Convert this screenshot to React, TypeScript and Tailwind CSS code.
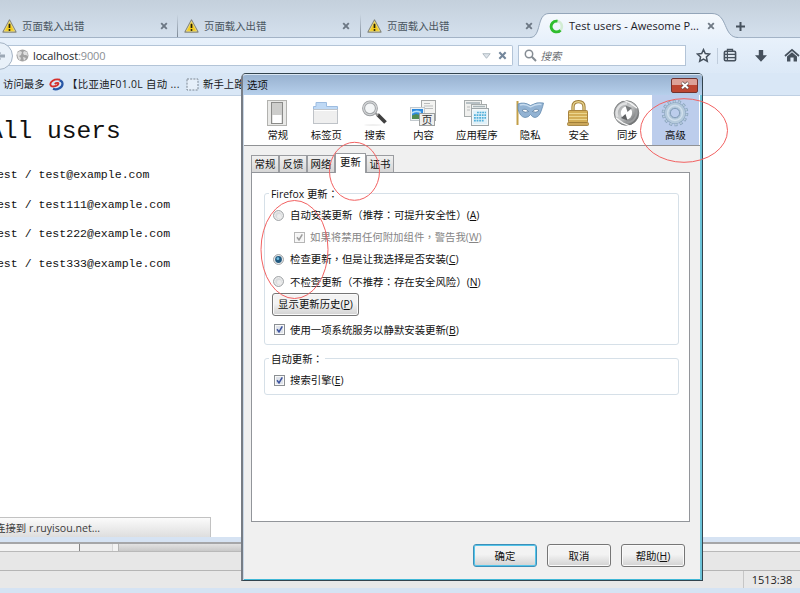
import React from "react";

type Kids = { children?: React.ReactNode };

/* Centred full-width punctuation */
const P = ({ children }: Kids) => <span className="font-['Noto_Sans_CJK_TC']">{children}</span>;
const U = ({ k }: { k: string }) => (
  <span>(<span className="underline underline-offset-1">{k}</span>)</span>
);

const Warning = () => (
  <svg width="15" height="14" viewBox="0 0 15 14" className="shrink-0">
    <path d="M7.5 1 L14 13 H1 Z" fill="#f2cb1d" stroke="#85867c" strokeWidth="1.3" strokeLinejoin="round" />
    <path d="M7.5 2.4 L12.7 12.2 H2.3 Z" fill="none" stroke="#fbf0a5" strokeWidth=".6" />
    <path d="M7.5 4.8 V9" stroke="#24210c" strokeWidth="1.7" />
    <circle cx="7.5" cy="11" r="1" fill="#24210c" />
  </svg>
);

const Cross = ({ color = "#6c7784", size = 8 }: { color?: string; size?: number }) => (
  <svg width={size} height={size} viewBox="0 0 8 8" className="shrink-0">
    <path d="M1.2 1.2 L6.8 6.8 M6.8 1.2 L1.2 6.8" stroke={color} strokeWidth="1.9" />
  </svg>
);

const BrowserTab = ({ pad, width }: { pad: string; width: string }) => (
  <div className={`flex h-[37px] items-center pt-[14px] ${pad} ${width}`}>
    <Warning />
    <span className="ml-[5px] flex-1 text-[#4b5661]">页面载入出错</span>
    <Cross />
  </div>
);

const TabSep = () => <div className="mt-[14px] h-[23px] w-px bg-linear-to-b from-transparent to-[#7b8794]" />;

const TabStrip = () => (
  <div className="relative flex h-[38px] shrink-0 border-b border-[#a3b3c6] bg-linear-to-b from-[#c4d0dc] to-[#d4e0ed]">
    <BrowserTab width="w-[177px]" pad="pl-[2px] pr-[9px]" />
    <TabSep />
    <BrowserTab width="w-[182px]" pad="pl-[6px] pr-[10px]" />
    <TabSep />
    <BrowserTab width="w-[177px]" pad="pl-[6px] pr-[5px]" />
    <svg width="214" height="27" viewBox="0 0 214 27" className="absolute left-[530px] top-[12px]">
      <defs>
        <linearGradient id="active" x1="0" y1="0" x2="0" y2="1">
          <stop offset="0" stopColor="#f5f9fd" />
          <stop offset="1" stopColor="#e8f1fb" />
        </linearGradient>
      </defs>
      <path d="M0 27 V25.5 C12 25.5 6 1.5 19 1.5 H182 C198 1.5 193 25.5 208 25.5 V27 Z" fill="url(#active)" />
      <path d="M0 25.5 C12 25.5 6 1.5 19 1.5 H182 C198 1.5 193 25.5 208 25.5" fill="none" stroke="#93a5b9" />
    </svg>
    <div className="relative flex h-[37px] flex-1 items-center pt-[15px] pl-[11px]">
      <svg width="15" height="15" viewBox="0 0 15 15">
        <circle cx="7.5" cy="7.5" r="5.4" fill="none" stroke="#d3ecd3" strokeWidth="2.6" />
        <path d="M8.5 2.2 A5.4 5.4 0 1 0 11.5 11.2" fill="none" stroke="#2fbd2f" strokeWidth="2.8" />
      </svg>
      <span className="ml-[5px] w-[138px] whitespace-nowrap text-[11px] tracking-[0.02px] text-[#1b2026]">Test users - Awesome P...</span>
      <Cross color="#6f7984" />
      <svg width="11" height="11" viewBox="0 0 11 11" className="ml-[20px]">
        <path d="M5.5 1 V10 M1 5.5 H10" stroke="#46515d" strokeWidth="2" />
      </svg>
    </div>
  </div>
);

const NavBar = () => (
  <div className="flex h-[35px] shrink-0 items-center bg-linear-to-b from-[#e8f1fb] to-[#dce9f7]">
    <svg width="14" height="30" viewBox="0 0 14 30" className="relative z-10 -mr-[14px]">
      <circle cx="-1" cy="15" r="13.5" fill="#e9f1f9" stroke="#a4b3c4" />
      <path d="M0 15 H5 M0 11 L-4 15 L0 19" stroke="#9ca8b5" strokeWidth="3" fill="none" />
    </svg>
    <div className="flex h-[21px] w-[514px] items-center rounded-r-[2px] border border-l-0 border-[#b3c4d7] bg-white pl-[16px]">
      <svg width="13" height="13" viewBox="0 0 13 13">
        <circle cx="6.5" cy="6.5" r="6" fill="#a2a2a2" />
        <path d="M1 4 L4 2 L6 3 L5 6 L3 7 L5 9 L4 12 L2 9 Z M8 2 L11 3 L12 7 L10 6 L8 6 L7 4 Z M7 8 L10 9 L8 12 Z" fill="#dedede" />
      </svg>
      <span className="ml-[4px] flex-1 text-[11px] tracking-[-0.12px] text-[#22262b]">
        localhost<span className="text-[#8b8f94]">:9000</span>
      </span>
      <svg width="9" height="6" viewBox="0 0 9 6">
        <path d="M.8 .7 H8.2 L4.5 5.3 Z" fill="#dde3e9" stroke="#a1adb8" strokeWidth=".8" />
      </svg>
      <span className="ml-[7px] mr-[5px]"><Cross color="#74879b" size={9} /></span>
    </div>
    <div className="ml-[5px] flex h-[21px] w-[169px] items-center border border-[#b3c4d7] bg-white pl-[5px]">
      <svg width="13" height="13" viewBox="0 0 13 13">
        <circle cx="5" cy="5" r="3.7" fill="none" stroke="#858c93" strokeWidth="1.5" />
        <path d="M7.8 7.8 L12 12" stroke="#858c93" strokeWidth="2" />
      </svg>
      <span className="ml-[4px] italic text-[#6c7074]">搜索</span>
    </div>
    <svg width="15" height="15" viewBox="0 0 15 15" className="ml-[10px]">
      <path d="M7.5 1.6 L9.3 5.5 L13.6 6 L10.4 8.9 L11.3 13.2 L7.5 11 L3.7 13.2 L4.6 8.9 L1.4 6 L5.7 5.5 Z" fill="#eef4fa" stroke="#46515d" strokeWidth="1.5" />
    </svg>
    <div className="ml-[6px] h-[16px] w-px bg-[#c0cddc]" />
    <svg width="14" height="15" viewBox="0 0 14 15" className="ml-[5px]">
      <path d="M4.5 3 V1.5 H9.5 V3" fill="none" stroke="#46515d" strokeWidth="1.4" />
      <rect x="1.4" y="3.2" width="11.2" height="9.6" rx="1.2" fill="#dfe8f1" stroke="#46515d" strokeWidth="1.6" />
      <path d="M1.5 6.4 H12.5 M1.5 9.6 H12.5 M4.4 4 V12" stroke="#46515d" strokeWidth="1.2" />
    </svg>
    <svg width="14" height="14" viewBox="0 0 14 14" className="ml-[17px]">
      <path d="M4.8 1 H9.2 V6.3 H13 L7 12.8 L1 6.3 H4.8 Z" fill="#46515d" />
    </svg>
    <svg width="16" height="15" viewBox="0 0 16 15" className="ml-[16px] shrink-0">
      <path d="M1 8 L8 1.8 L15 8" fill="none" stroke="#46515d" strokeWidth="1.7" />
      <path d="M3 8.4 L8 4.2 L13 8.4 V13.5 H9.6 V9.5 H6.4 V13.5 H3 Z" fill="#46515d" />
    </svg>
  </div>
);

const Bookmarks = () => (
  <div className="flex h-[23px] shrink-0 items-center whitespace-nowrap border-b border-[#bfd0e3] bg-[#d9e7f6] pl-[3px] text-[#17191c]">
    <span className="w-[46px]">访问最多</span>
    <svg width="15" height="13" viewBox="0 0 15 13">
      <path d="M4 10.8 C8 12.500 13.800 9.500 13.500 5.500 C13.300 3.500 12 2.600 10.500 2.300" fill="none" stroke="#2857a6" strokeWidth="2.200" />
      <path d="M11 1.700 C5 .3 .6 4 1.500 7 C2.200 9.200 6 8.800 8.300 7.200 C9.500 6.300 9.800 5.200 8.800 4.900 C7.800 4.700 6.500 5.200 5.800 6" fill="none" stroke="#d6302c" strokeWidth="1.900" />
    </svg>
    <span className="ml-[3px] w-[119px] tracking-[0.32px]">【比亚迪F01.0L 自动 ...</span>
    <svg width="13" height="13" viewBox="0 0 13 13">
      <rect x="1" y="1" width="11" height="11" fill="#e6eff9" stroke="#7c8793" strokeDasharray="2 1.2" />
    </svg>
    <span className="ml-[4px]">新手上路</span>
  </div>
);

const Users = () => (
  <div className="h-[421px] shrink-0 overflow-hidden bg-white font-['Liberation_Mono'] text-[#111]">
    <h1 className="-ml-[12px] mt-[20px] h-[32px] text-[24.6px] leading-[32px]">All users</h1>
    <div className="-ml-[10px] mt-[17px] text-[11.55px]">
      {["test@example.com", "test111@example.com", "test222@example.com", "test333@example.com"].map((m) => (
        <div key={m} className="mt-[9.6px] h-[20px] whitespace-pre leading-[20px]">{"test / " + m}</div>
      ))}
    </div>
  </div>
);

const Footer = () => (
  <>
    <div className="h-[20px] shrink-0 bg-white">
      <div className="flex h-[20px] w-[211px] items-center whitespace-nowrap border-r border-t border-[#c2c2c2] bg-linear-to-b from-[#fbfbfb] to-[#dedede] text-[#3c3c3c]">
        <span className="-ml-[5px]">连接到 <span className="text-[10.6px]">r.ruyisou.net...</span></span>
      </div>
    </div>
    <div className="h-[5px] shrink-0 bg-[#d6e3f3]" />
    <div className="h-[2px] shrink-0 bg-[#a5a6a8]" />
    <div className="flex h-[7px] shrink-0 bg-[#f3f3f3]">
      <div className="w-[80px] border-r border-[#858585]" />
      <div className="w-[33px] border-r border-[#d8d8d8] bg-[#ededed]" />
      <div className="ml-[5px] w-[124px] border-l border-[#b5b5b5] bg-linear-to-b from-[#e2e2e2] to-[#c9c9c9]" />
    </div>
    <div className="h-[19px] shrink-0 border-t border-[#b9b9b9] bg-[#e7e7e7]" />
    <div className="flex h-[18px] shrink-0 justify-end border-t border-[#b5b5b5] bg-[#e8e8e8]">
      <div className="flex w-[57px] items-center justify-center border-l border-[#c6c6c6] text-[11px] text-[#222]">1513:38</div>
    </div>
    <div className="flex-1 bg-[#d5e3f3]" />
  </>
);

const SwitchIcon = () => (
  <svg width="26" height="26" viewBox="0 0 26 26">
    <rect x="2.500" y=".5" width="19" height="25" fill="#e9e9e7" stroke="#b2b2af" />
    <rect x="6.500" y="2.500" width="11" height="21" fill="#cdcdcb" stroke="#8b8b89" />
    <rect x="7.500" y="15" width="9" height="8" fill="#fff" />
  </svg>
);
const FolderIcon = () => (
  <svg width="26" height="26" viewBox="0 0 26 26">
    <path d="M.5 12 V6.500 H3 V2.500 H13.500 V6.500 H24.500 V12 Z" fill="#bfd9f5" stroke="#9dbce0" />
    <rect x=".5" y="9.500" width="24" height="14" fill="#efefef" stroke="#bfc3c8" />
    <path d="M1 10.500 H24" stroke="#fff" />
  </svg>
);
const SearchIcon = () => (
  <svg width="26" height="26" viewBox="0 0 26 26">
    <ellipse cx="11" cy="25" rx="9" ry=".7" fill="#ebebeb" />
    <path d="M15.500 14.500 L23.500 22.500" stroke="#404040" strokeWidth="3.800" />
    <path d="M12.500 12 L16 15.500" stroke="#999" strokeWidth="2.200" />
    <circle cx="8" cy="8.300" r="6.400" fill="#f4f6f7" stroke="#9b9ea1" strokeWidth="3" />
    <circle cx="8" cy="8.300" r="6.400" fill="none" stroke="#d2d4d6" strokeWidth="1.200" />
  </svg>
);
const ContentIcon = () => (
  <svg width="28" height="26" viewBox="0 0 28 26">
    <rect x="11.500" y=".5" width="14" height="20" fill="#f4f4f2" stroke="#a6a8a8" />
    <path d="M14 3.500 H20 M14 6 H23 M14 8.500 H23" stroke="#bbbdbd" />
    <rect x=".5" y="7.500" width="14" height="13" fill="#eef2f4" stroke="#c3cacf" />
    <rect x="2" y="9" width="11" height="10" fill="#2e8ade" />
    <path d="M2 15.500 L6 14 L13 16 V19 H2 Z" fill="#4f8a52" />
    <path d="M2 13 Q6 10 11 12.500" stroke="#b5dff9" strokeWidth="1.800" fill="none" />
    <rect x="9.500" y="13.500" width="15" height="12" fill="#efefed" stroke="#9da0a0" />
    <text x="11.500" y="23.600" fontSize="11" fill="#333" fontFamily="Noto Sans CJK SC, sans-serif">页</text>
  </svg>
);
const AppsIcon = () => (
  <svg width="28" height="26" viewBox="0 0 28 26">
    <rect x="1.500" y=".5" width="17" height="16" fill="#f0f0ee" stroke="#a6abab" />
    <path d="M3 3 H17" stroke="#a9b5b9" strokeWidth="1.600" />
    <path d="M4 7 H7 M4 10 H7" stroke="#b9bcbc" />
    <rect x="8.500" y="4.500" width="15" height="14" fill="#eef0f0" stroke="#a6abab" />
    <path d="M10 6.500 H22" stroke="#a9b5b9" strokeWidth="1.400" />
    <rect x="8.500" y="8.500" width="17" height="17" fill="#f5f8f9" stroke="#9fa7aa" />
    <rect x="10" y="10.500" width="14" height="13.500" fill="#dff1f9" />
    <path d="M14 12.500 H23 M11 15.200 H23 M11 17.900 H23 M11 20.600 H21" stroke="#52b0da" strokeWidth="1.700" strokeDasharray="1.800 .8" />
  </svg>
);
const MaskIcon = () => (
  <svg width="30" height="26" viewBox="0 0 30 26">
    <path d="M2.500 1 V25" stroke="#c29f48" strokeWidth="2" />
    <path d="M3 4 Q9 1.500 15.500 5.500 Q22 1.500 28.500 3 Q28 6 26.500 10 Q24.500 17 20 17.500 Q17.500 17.500 15.500 14.500 Q13.500 17.500 10 17.500 Q5 17 3 9 Z" fill="#93b3d3" stroke="#658bb0" strokeWidth=".8" />
    <path d="M5 5 Q10 3.500 15.500 7 Q21 3.500 26.500 4.500" stroke="#c8dcef" strokeWidth="1.400" fill="none" />
    <path d="M7 10.500 Q10 7.500 13.500 11.500 Q10 13.500 7 10.500 Z M17.500 11.500 Q21 7.500 24 10.500 Q21 13.500 17.500 11.500 Z" fill="#fff" stroke="#4f7194" strokeWidth=".7" />
  </svg>
);
const LockIcon = () => (
  <svg width="26" height="26" viewBox="0 0 26 26">
    <path d="M7 13 V7 Q7 1.700 12.500 1.700 Q18 1.700 18 7 V13" fill="none" stroke="#9b7832" strokeWidth="3.200" />
    <path d="M7 13 V7 Q7 1.700 12.500 1.700 Q18 1.700 18 7 V13" fill="none" stroke="#e6d28e" strokeWidth="1.400" />
    <rect x="2.500" y="10.500" width="19" height="12" rx="1" fill="#d3ae57" stroke="#a78340" />
    <path d="M3 13.500 H21 M3 16.500 H21 M3 19.500 H21" stroke="#ecd68f" strokeWidth="1.200" />
    <rect x="1.500" y="22.500" width="21" height="3" rx="1" fill="#cba75a" stroke="#9b7832" strokeWidth=".8" />
  </svg>
);
const SyncIcon = () => (
  <svg width="28" height="26" viewBox="0 0 28 26">
    <defs>
      <linearGradient id="swirl" x1="0" y1="0" x2="1" y2="1">
        <stop offset="0" stopColor="#8d8f91" />
        <stop offset=".45" stopColor="#c9cbcc" />
        <stop offset="1" stopColor="#4c4e50" />
      </linearGradient>
    </defs>
    <circle cx="13.500" cy="13" r="12.300" fill="url(#swirl)" stroke="#717375" strokeWidth=".8" />
    <path d="M4.500 17 A9.600 9.600 0 0 1 14 3.500" fill="none" stroke="#dfe0e1" strokeWidth="2.400" />
    <path d="M22.500 9 A9.600 9.600 0 0 1 13.500 22.500" fill="none" stroke="#9b9d9f" strokeWidth="2" />
    <ellipse cx="13.500" cy="13" rx="5.600" ry="6.400" fill="#fff" />
    <path d="M10 0 L17 3 L24 8" fill="none" stroke="#f8f8f8" strokeWidth="1.300" />
    <path d="M17 26 L10 23 L3 18" fill="none" stroke="#f8f8f8" strokeWidth="1.300" />
    <path d="M12.500 5.500 L19 8 L14.500 12 Z" fill="#77797b" />
    <path d="M14.500 20.500 L8 18 L12.500 14 Z" fill="#5f6163" />
  </svg>
);
const GearIcon = () => (
  <svg width="28" height="28" viewBox="0 0 28 28">
    <circle cx="14" cy="14" r="11.400" fill="none" stroke="#8ba5be" strokeWidth="3.800" strokeDasharray="2.900 2.217" />
    <circle cx="14" cy="14" r="11.200" fill="none" stroke="#b9cde0" strokeWidth="2.600" strokeDasharray="1.700 3.326" strokeDashoffset="-.6" />
    <circle cx="14" cy="14" r="7.800" fill="none" stroke="#8ba5be" strokeWidth="6" />
    <circle cx="14" cy="14" r="7.800" fill="none" stroke="#b5cadc" strokeWidth="5" />
    <circle cx="14" cy="14" r="7.400" fill="none" stroke="#d0dfec" strokeWidth="1.500" />
    <circle cx="14" cy="14" r="4.600" fill="#bccdec" stroke="#819cb5" strokeWidth=".9" />
  </svg>
);

const tools = [
  { label: "常规", icon: <SwitchIcon />, w: "w-[48.6px]" },
  { label: "标签页", icon: <FolderIcon />, w: "w-[48.6px]" },
  { label: "搜索", icon: <SearchIcon />, w: "w-[48.6px]" },
  { label: "内容", icon: <ContentIcon />, w: "w-[48.6px]" },
  { label: "应用程序", icon: <AppsIcon />, w: "w-[58px]" },
  { label: "隐私", icon: <MaskIcon />, w: "w-[48.6px]" },
  { label: "安全", icon: <LockIcon />, w: "w-[48.6px]" },
  { label: "同步", icon: <SyncIcon />, w: "w-[48.6px]" },
  { label: "高级", icon: <GearIcon />, w: "w-[47.5px] bg-[#bccdec]" },
];

const Radio = ({ on }: { on?: boolean }) => (
  <svg width="11" height="11" viewBox="0 0 11 11" className="mr-[6px] shrink-0">
    <circle cx="5.500" cy="5.500" r="4.900" fill="#f6f6f6" stroke="#8b8f93" strokeWidth=".9" />
    <circle cx="5.500" cy="5.500" r="3.400" fill={on ? "#21597f" : "#d9dbdd"} />
    {on ? <circle cx="4.900" cy="4.700" r="1.400" fill="#70bde0" /> : <circle cx="6.200" cy="6.300" r="2.200" fill="#ececec" />}
  </svg>
);
const Check = ({ off }: { off?: boolean }) => (
  <svg width="11" height="11" viewBox="0 0 11 11" className="mr-[5px] shrink-0">
    <rect x=".5" y=".5" width="10" height="10" fill="#f8f8f8" stroke={off ? "#b6b6b6" : "#8b8f93"} />
    <rect x="2" y="2" width="7" height="7" fill={off ? "#f5f5f5" : "#dfe3ea"} />
    <path d="M3 5.300 L5 8 L8.300 2.300" fill="none" stroke={off ? "#9c9c9c" : "#3c529d"} strokeWidth="1.500" />
  </svg>
);

const Button = ({ children, main }: Kids & { main?: boolean }) => (
  <div className={`flex h-[23px] w-[64px] items-center justify-center rounded-[3px] border bg-linear-to-b from-[#f3f3f3] from-45% to-[#d2d2d2] text-[#111] ${main ? "border-[#3c8fb8] shadow-[inset_0_0_0_1px_#54c5ea]" : "border-[#767676] shadow-[inset_0_0_0_1px_#fafafa]"}`}>
    {children}
  </div>
);

const Tab = ({ children, w }: Kids & { w: string }) => (
  <div className={`flex h-[17px] items-center justify-center border border-b-0 border-[#9a9ca0] bg-linear-to-b from-[#f1f1f1] to-[#d6d6d6] ${w}`}>{children}</div>
);

const Dialog = () => (
  <div className="absolute left-[241px] top-[73px] flex h-[508px] w-[462px] flex-col rounded-t-[5px] border border-l-2 border-[#33444e] border-l-[#777d85] bg-[#f0f0f0] text-[#101010] shadow-[inset_1px_0_#c9d6e5,inset_-2px_0_#6cc3d8,inset_0_-1px_#3fb7d6]">
    <div className="flex h-[21px] shrink-0 items-center justify-between rounded-t-[3px] border-t border-[#d9e6f3] bg-linear-to-b from-[#98b2d0] to-[#b6cfeb] pl-[4px] pr-[4px]">
      <span>选项</span>
      <div className="flex h-[15px] w-[27px] items-center justify-center rounded-[2px] border border-[#713330] bg-linear-to-b from-[#dda198] from-45% to-[#bd4632] to-50%">
        <svg width="10" height="9" viewBox="0 0 10 9">
          <path d="M1.800 1.500 L8.200 7.500 M8.200 1.500 L1.800 7.500" stroke="#604743" strokeWidth="3.200" />
          <path d="M2 1.700 L8 7.300 M8 1.700 L2 7.300" stroke="#fff" strokeWidth="2" />
        </svg>
      </div>
    </div>
    <div className="ml-[1px] mr-[2px] flex h-[51px] shrink-0 border-b border-[#909295] bg-white pl-[9.5px]">
      {tools.map((t) => (
        <div key={t.label} className={`flex h-[50px] shrink-0 flex-col items-center pt-[4px] ${t.w}`}>
          <div className="flex h-[28px] items-center">{t.icon}</div>
          <span className="whitespace-nowrap leading-[16px]">{t.label}</span>
        </div>
      ))}
    </div>
    <div className="ml-[8px] mt-[6px] flex h-[20px] shrink-0 items-end">
      <Tab w="w-[28px]">常规</Tab>
      <Tab w="w-[28px]">反馈</Tab>
      <Tab w="w-[28px]">网络</Tab>
      <div className="relative -mb-px flex h-[20px] w-[31px] items-center justify-center border border-b-0 border-[#9a9ca0] bg-white pb-[3px]">更新</div>
      <Tab w="w-[28px]">证书</Tab>
    </div>
    <div className="ml-[8px] h-[350px] w-[439px] shrink-0 border border-[#92959a] bg-white pl-[12px] pt-[20px]">
      <div className="h-[152px] w-[415px] rounded-[3px] border border-[#d6e0e8] pl-[7px]">
        <div className="-ml-[3px] -mt-[9px] flex h-[18px] w-fit items-center bg-white px-[2px]">Firefox 更新<P>：</P></div>
        <div className="mt-[1px] flex h-[22.2px] items-center pl-[1px]"><Radio /><span>自动安装更新（推荐<P>：</P>可提升安全性）<U k="A" /></span></div>
        <div className="flex h-[22.2px] items-center pl-[22px] text-[#868686]"><Check off />如果将禁用任何附加组件<P>，</P>警告我<U k="W" /></div>
        <div className="flex h-[22.2px] items-center pl-[1px]"><Radio on />检查更新<P>，</P>但是让我选择是否安装<U k="C" /></div>
        <div className="flex h-[22.2px] items-center pl-[1px]"><Radio />不检查更新（不推荐<P>：</P>存在安全风险）<U k="N" /></div>
        <div className="flex h-[23px] w-[87px] items-center justify-center rounded-[3px] border border-[#767676] bg-linear-to-b from-[#f3f3f3] from-45% to-[#d2d2d2] shadow-[inset_0_0_0_1px_#fafafa]">显示更新历史<U k="P" /></div>
        <div className="mt-[3px] flex h-[22px] items-center pl-[2px]"><Check />使用一项系统服务以静默安装更新<U k="B" /></div>
      </div>
      <div className="mt-[13px] h-[37px] w-[415px] rounded-[3px] border border-[#d6e0e8] pl-[7px]">
        <div className="-ml-[3px] -mt-[9px] flex h-[18px] w-fit items-center bg-white px-[2px]">自动更新<P>：</P></div>
        <div className="mt-[1px] flex h-[22px] items-center pl-[2px]"><Check />搜索引擎<U k="E" /></div>
      </div>
    </div>
    <div className="flex gap-[10px] pl-[230px] pt-[22px]">
      <Button main>确定</Button>
      <Button>取消</Button>
      <Button>帮助<U k="H" /></Button>
    </div>
  </div>
);

export default function App() {
  return (
    <div className="relative flex h-[593px] w-[800px] flex-col overflow-hidden bg-white font-['Open_Sans','Noto_Sans_CJK_SC',sans-serif] text-[10.4px] leading-[16px]">
      <TabStrip />
      <NavBar />
      <Bookmarks />
      <Users />
      <Footer />
      <Dialog />
      <svg width="800" height="593" viewBox="0 0 800 593" className="pointer-events-none absolute left-0 top-0">
        <g fill="none" stroke="#f26262" strokeWidth="1">
          <ellipse cx="684" cy="130.500" rx="43.500" ry="31.800" />
          <ellipse cx="354.500" cy="171.300" rx="25" ry="29" />
          <ellipse cx="294.500" cy="249.500" rx="33.500" ry="49" />
        </g>
      </svg>
    </div>
  );
}
